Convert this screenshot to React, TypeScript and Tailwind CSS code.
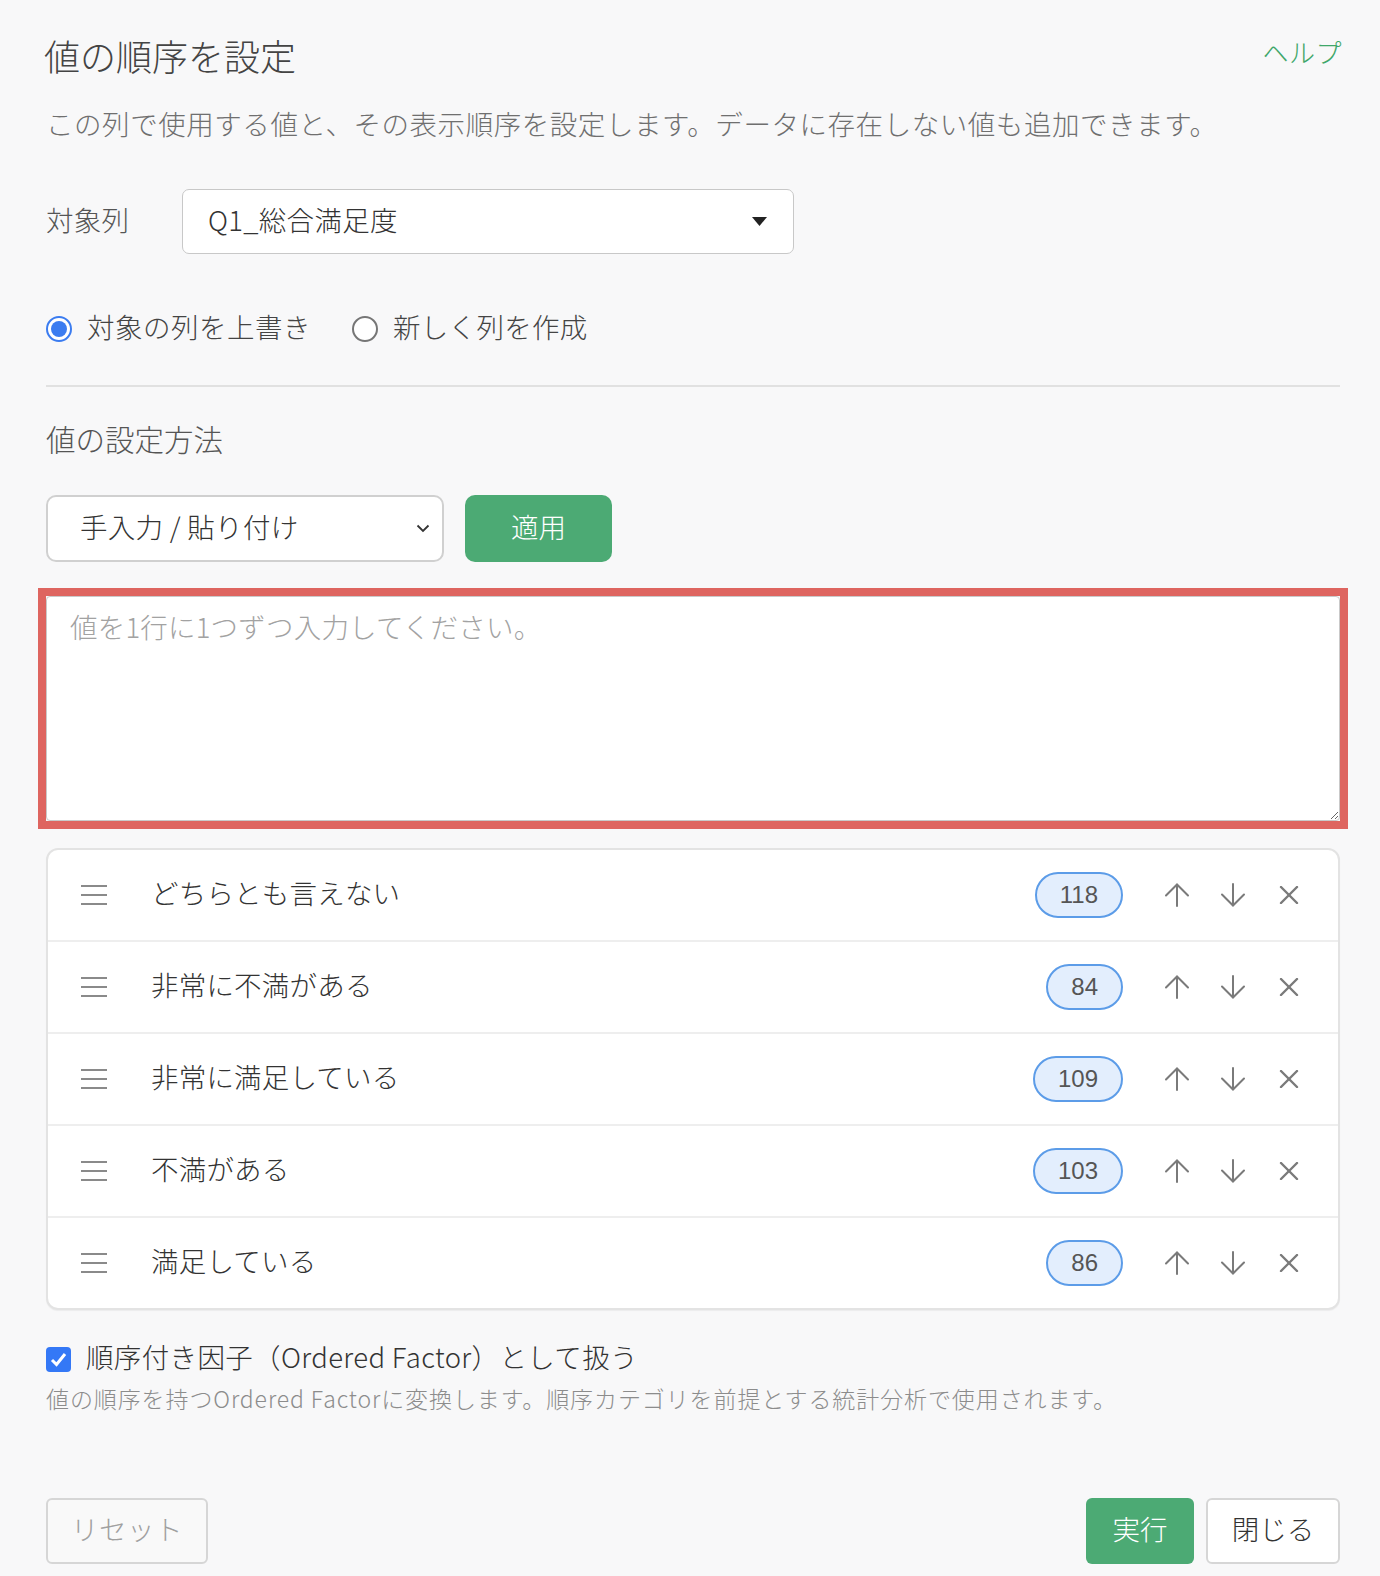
import { useState } from "react"

const VALUES = [
  { label: "どちらとも言えない", count: 118 },
  { label: "非常に不満がある", count: 84 },
  { label: "非常に満足している", count: 109 },
  { label: "不満がある", count: 103 },
  { label: "満足している", count: 86 },
]

function DragHandle() {
  return (
    <svg width="26" height="20" viewBox="0 0 26 20" className="shrink-0">
      <g stroke="#8a8a8a" strokeWidth="2">
        <line x1="0" y1="1" x2="26" y2="1" />
        <line x1="0" y1="10" x2="26" y2="10" />
        <line x1="0" y1="19" x2="26" y2="19" />
      </g>
    </svg>
  )
}

function ArrowIcon({ down = false }: { down?: boolean }) {
  return (
    <svg
      width="26"
      height="24"
      viewBox="0 0 26 24"
      className={down ? "rotate-180" : ""}
    >
      <g stroke="#7a7a7a" strokeWidth="2" fill="none" strokeLinecap="round">
        <line x1="13" y1="2" x2="13" y2="23" />
        <polyline points="2,12.5 13,1.5 24,12.5" />
      </g>
    </svg>
  )
}

function CloseIcon() {
  return (
    <svg width="20" height="18" viewBox="0 0 20 18">
      <g stroke="#7a7a7a" strokeWidth="2.4" strokeLinecap="round">
        <line x1="2" y1="1" x2="18" y2="17" />
        <line x1="18" y1="1" x2="2" y2="17" />
      </g>
    </svg>
  )
}

function Radio({ checked }: { checked: boolean }) {
  if (!checked) {
    return <span className="h-[26px] w-[26px] rounded-full border-2 border-[#767676] bg-white" />
  }
  return (
    <span className="flex h-[26px] w-[26px] items-center justify-center rounded-full border-2 border-[#3b7cf0] bg-white">
      <span className="h-[16px] w-[16px] rounded-full bg-[#3b7cf0]" />
    </span>
  )
}

export default function App() {
  const [mode, setMode] = useState<"overwrite" | "new">("overwrite")
  const [ordered, setOrdered] = useState(true)

  return (
    <div className="min-h-screen bg-[#f8f8f9] pl-[46px] pr-[40px] pt-[33px] pb-[13px] font-light font-['Noto_Sans_CJK_JP','Liberation_Sans',sans-serif]">
      <div className="flex justify-between">
        <h1 className="-ml-[2px] text-[36px] leading-[44px] font-light text-[#444]">
          値の順序を設定
        </h1>
        <a className="mt-[1px] -mr-[2px] text-[26px] leading-[36px] tracking-[0.5px] text-[#3fa76a]">
          ヘルプ
        </a>
      </div>

      <p className="mt-[26px] text-[27.5px] leading-[40px] tracking-[0.55px] text-[#6f6f6f]">
        この列で使用する値と、その表示順序を設定します。データに存在しない値も追加できます。
      </p>

      <div className="mt-[46px] flex items-center">
        <span className="w-[136px] pb-[4px] text-[27.5px] tracking-[0.3px] text-[#555]">対象列</span>
        <div className="flex h-[65px] w-[612px] items-center justify-between rounded-[7px] border border-[#c8c8c8] bg-white pl-[25px] pr-[26px]">
          <span className="pb-[4px] text-[27.5px] tracking-[0.3px] text-[#333]">Q1_総合満足度</span>
          <svg width="15" height="9" viewBox="0 0 15 9">
            <polygon points="0,0 15,0 7.5,9" fill="#222" />
          </svg>
        </div>
      </div>

      <div className="mt-[55px] flex h-[40px] items-center">
        <label
          className="flex items-center gap-[15px]"
          onClick={() => setMode("overwrite")}
        >
          <Radio checked={mode === "overwrite"} />
          <span className="pb-[4px] text-[27.5px] tracking-[0.5px] text-[#444]">対象の列を上書き</span>
        </label>
        <label
          className="ml-[41px] flex items-center gap-[15px]"
          onClick={() => setMode("new")}
        >
          <Radio checked={mode === "new"} />
          <span className="pb-[4px] text-[27.5px] tracking-[0.3px] text-[#444]">新しく列を作成</span>
        </label>
      </div>

      <div className="mt-[36px] h-[2px] bg-[#e1e1e1]" />

      <h2 className="mt-[31px] text-[29.5px] leading-[40px] font-light text-[#555]">
        値の設定方法
      </h2>

      <div className="mt-[37px] flex h-[67px] gap-[21px]">
        <div className="flex w-[398px] items-center justify-between rounded-[10px] border-2 border-[#d0d0d0] bg-white pl-[32px] pr-[12px]">
          <span className="pb-[4px] text-[27.5px] tracking-[0.3px] text-[#333]">手入力 / 貼り付け</span>
          <svg width="14" height="9" viewBox="0 0 14 9">
            <polyline
              points="1.5,1.5 7,7 12.5,1.5"
              fill="none"
              stroke="#333"
              strokeWidth="1.8"
            />
          </svg>
        </div>
        <button className="w-[147px] rounded-[10px] bg-[#4caa74] pb-[4px] text-[27.5px] text-white">
          適用
        </button>
      </div>

      <div className="mt-[26px] -mx-[8px] border-[8px] border-[#de6560]">
        <textarea
          className="block h-[225px] w-full rounded-[4px] border border-[#c9c9c9] bg-white px-[23px] pt-[11px] text-[27.5px] leading-[36px] tracking-[0.2px] text-[#333] outline-none placeholder:text-[#a2a2a2]"
          placeholder="値を1行に1つずつ入力してください。"
        />
      </div>

      <div className="mt-[19px] overflow-hidden rounded-[12px] border-2 border-[#e3e3e3] bg-white shadow-[0_1px_1px_rgba(0,0,0,0.05)]">
        {VALUES.map((v, i) => (
          <div
            key={v.label}
            className={
              i < VALUES.length - 1
                ? "flex h-[92px] items-center border-b-2 border-[#eeeeee] pl-[33px] pr-[36px]"
                : "flex h-[90px] items-center pl-[33px] pr-[36px]"
            }
          >
            <DragHandle />
            <span className="ml-[44px] flex-1 pb-[4px] text-[27.5px] tracking-[0.2px] text-[#333]">
              {v.label}
            </span>
            <span className="flex h-[46px] items-center rounded-full border-2 border-[#5c9ce8] bg-[#e3eefd] px-[23px] font-['Liberation_Sans',sans-serif] text-[24px] font-normal text-[#555]">
              {v.count}
            </span>
            <div className="ml-[41px] flex items-center gap-[30px]">
              <ArrowIcon />
              <ArrowIcon down />
              <span className="flex w-[26px] justify-center">
                <CloseIcon />
              </span>
            </div>
          </div>
        ))}
      </div>

      <label
        className="mt-[29px] flex h-[40px] items-center gap-[15px]"
        onClick={() => setOrdered(!ordered)}
      >
        <span
          className={
            ordered
              ? "flex h-[25px] w-[25px] items-center justify-center rounded-[4px] bg-[#3478f6]"
              : "h-[25px] w-[25px] rounded-[4px] border-2 border-[#767676] bg-white"
          }
        >
          {ordered && (
            <svg width="17" height="15" viewBox="0 0 17 15">
              <polyline
                points="2,8 6.5,12.5 15,2"
                fill="none"
                stroke="#fff"
                strokeWidth="3"
              />
            </svg>
          )}
        </span>
        <span className="pb-[4px] text-[27.5px] tracking-[0.35px] text-[#333]">
          順序付き因子（Ordered Factor）として扱う
        </span>
      </label>
      <p className="mt-[2px] text-[23px] leading-[34px] tracking-[0.9px] text-[#8c8c8c]">
        値の順序を持つOrdered Factorに変換します。順序カテゴリを前提とする統計分析で使用されます。
      </p>

      <div className="mt-[83px] flex h-[66px] items-stretch">
        <button className="w-[162px] rounded-[6px] border-2 border-[#d6d6d6] bg-[#f9f9f9] pb-[4px] text-[27.5px] tracking-[0.5px] text-[#a0a0a0]">
          リセット
        </button>
        <div className="ml-auto flex gap-[12px]">
          <button className="w-[108px] rounded-[6px] bg-[#4caa74] pb-[4px] text-[27.5px] text-white">
            実行
          </button>
          <button className="w-[134px] rounded-[6px] border-2 border-[#d6d6d6] bg-white pb-[4px] text-[27.5px] text-[#333]">
            閉じる
          </button>
        </div>
      </div>
    </div>
  )
}
